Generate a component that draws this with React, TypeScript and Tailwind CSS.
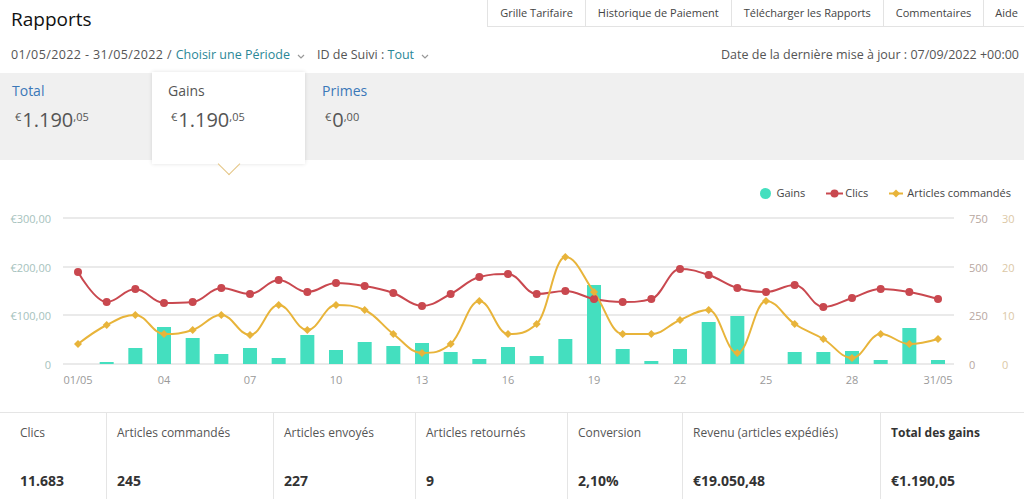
import React from "react";

// chart geometry (page pixels)
const X0 = 78;
const STEP = 28.667;
const BASE = 364;

// tops of the Gains bars, per day
const bars = [364, 362, 348, 327, 338, 354, 348, 358, 335, 350, 342, 346, 343, 352, 359, 347, 356, 339, 285, 349, 361, 349, 322, 316, 364, 352, 352, 351, 360, 328, 360];
const clics = [272, 302, 289, 303, 302, 288, 294, 280, 292, 283, 286, 293, 306, 294, 277, 274, 294, 291, 299, 302, 299, 269, 275, 288, 292, 285, 307, 298, 289, 292, 299];
const articles = [344, 325, 315, 334, 330, 315, 335, 305, 330, 305, 310, 334, 353, 344, 301, 334, 324, 257, 292, 334, 334, 320, 310, 353, 301, 324, 339, 358, 334, 344, 339];

const gridY = [218, 267, 315, 364];
const leftLabels = ["€300,00", "€200,00", "€100,00", "0"];
const clicLabels = ["750", "500", "250", "0"];
const artLabels = ["30", "20", "10", "0"];
const xLabels: [number, string][] = [
  [0, "01/05"], [3, "04"], [6, "07"], [9, "10"], [12, "13"], [15, "16"],
  [18, "19"], [21, "22"], [24, "25"], [27, "28"], [30, "31/05"],
];

const tabs = ["Grille Tarifaire", "Historique de Paiement", "Télécharger les Rapports", "Commentaires", "Aide"];

const stats = [
  { label: "Clics", value: "11.683" },
  { label: "Articles commandés", value: "245" },
  { label: "Articles envoyés", value: "227" },
  { label: "Articles retournés", value: "9" },
  { label: "Conversion", value: "2,10%" },
  { label: "Revenu (articles expédiés)", value: "€19.050,48" },
  { label: "Total des gains", value: "€1.190,05", strong: true },
];

type Pt = { x: number; y: number };

// highcharts-like spline
function splinePath(ys: number[]) {
  const pts: Pt[] = ys.map((y, i) => ({ x: X0 + i * STEP, y }));
  const sm = 1.5;
  const den = sm + 1;
  const right: Pt[] = [];
  let d = `M${pts[0].x},${pts[0].y}`;
  for (let i = 1; i < pts.length; i++) {
    const p = pts[i];
    const last = pts[i - 1];
    const next = pts[i + 1];
    let lcx = p.x;
    let lcy = p.y;
    if (next) {
      lcx = (sm * p.x + last.x) / den;
      lcy = (sm * p.y + last.y) / den;
      const rcx = (sm * p.x + next.x) / den;
      let rcy = (sm * p.y + next.y) / den;
      let corr = 0;
      if (rcx !== lcx) corr = ((rcy - lcy) * (rcx - p.x)) / (rcx - lcx) + p.y - rcy;
      lcy += corr;
      rcy += corr;
      if (lcy > last.y && lcy > p.y) {
        lcy = Math.max(last.y, p.y);
        rcy = 2 * p.y - lcy;
      } else if (lcy < last.y && lcy < p.y) {
        lcy = Math.min(last.y, p.y);
        rcy = 2 * p.y - lcy;
      }
      if (rcy > next.y && rcy > p.y) {
        rcy = Math.max(next.y, p.y);
        lcy = 2 * p.y - rcy;
      } else if (rcy < next.y && rcy < p.y) {
        rcy = Math.min(next.y, p.y);
        lcy = 2 * p.y - rcy;
      }
      right[i] = { x: rcx, y: rcy };
    }
    const lr = right[i - 1] ?? last;
    d += ` C${lr.x},${lr.y} ${lcx},${lcy} ${p.x},${p.y}`;
  }
  return d;
}

function Amount({ whole, cents }: { whole: string; cents: string }) {
  return (
    <div className="flex items-start text-[#555]">
      <span className="text-[11px] leading-none mt-[5px] mr-[1px]">€</span>
      <span className="text-[20px] leading-[27px]">{whole}</span>
      <span className="text-[11px] leading-none mt-[5px]">,{cents}</span>
    </div>
  );
}

function Chevron() {
  return (
    <svg width="8" height="5" viewBox="0 0 8 5" className="ml-[7px] mt-[3px]">
      <path d="M1 1 L4 4 L7 1" fill="none" stroke="#999" strokeWidth="1.2" />
    </svg>
  );
}

function Chart() {
  return (
    <svg width="1024" height="200" viewBox="0 205 1024 200" className="block">
      {gridY.map((y) => (
        <line key={y} x1="63" x2="954" y1={y} y2={y} stroke="#e3e3e3" strokeWidth="1.5" />
      ))}
      {gridY.map((y, i) => (
        <g key={"l" + y} fontSize="11">
          <text x="51" y={y + 5} textAnchor="end" fill="#a6c2bd">{leftLabels[i]}</text>
          <text x="969" y={y + 5} fill="#b7a79f">{clicLabels[i]}</text>
          <text x="1002" y={y + 5} fill="#dcc8a6">{artLabels[i]}</text>
        </g>
      ))}
      {xLabels.map(([i, t]) => (
        <text key={t} x={X0 + i * STEP} y="384" textAnchor="middle" fontSize="11" fill="#9a9a9a">{t}</text>
      ))}
      {bars.map((top, i) =>
        top < BASE ? (
          <rect key={i} x={X0 + i * STEP - 7} y={top} width="14" height={BASE - top} fill="#44dfbf" />
        ) : null
      )}
      <path d={splinePath(clics)} fill="none" stroke="#c9484f" strokeWidth="2" />
      <path d={splinePath(articles)} fill="none" stroke="#e8b43a" strokeWidth="2" />
      {clics.map((y, i) => (
        <circle key={"c" + i} cx={X0 + i * STEP} cy={y} r="4" fill="#c9484f" />
      ))}
      {articles.map((y, i) => {
        const x = X0 + i * STEP;
        return <path key={"a" + i} d={`M${x},${y - 4} L${x + 4},${y} L${x},${y + 4} L${x - 4},${y} Z`} fill="#e8b43a" />;
      })}
    </svg>
  );
}

export default function App() {
  return (
    <div className="w-[1024px] h-[499px] overflow-hidden bg-white font-['Open_Sans',sans-serif] text-[#333]">
      {/* entête */}
      <div className="h-[73px]">
        <div className="flex justify-between items-start h-[32px]">
          <h1 className="pl-[11px] pt-[6px] text-[19px] leading-[26px] text-[#111]">Rapports</h1>
          <div className="flex h-[27px] border-b border-[#e3e3e3]">
            {tabs.map((t, i) => (
              <div
                key={t}
                className={`border-l border-[#e3e3e3] pt-[5px] text-[11px] leading-[15px] text-[#444] ${i === tabs.length - 1 ? "pl-[11px] pr-[6px]" : "px-[12px]"}`}
              >
                {t}
              </div>
            ))}
          </div>
        </div>
        <div className="flex justify-between items-center mt-[14px] text-[12.5px] leading-[17px] text-[#555]">
          <div className="flex items-center pl-[11px]">
            <span className="tracking-[0.4px]">01/05/2022 - 31/05/2022 /&nbsp;</span>
            <span className="text-[#2a8797]">Choisir une Période</span>
            <Chevron />
            <span className="ml-[12px]">ID de Suivi :&nbsp;</span>
            <span className="text-[#2a8797]">Tout</span>
            <Chevron />
          </div>
          <div className="pr-[5px]">Date de la dernière mise à jour : 07/09/2022 +00:00</div>
        </div>
      </div>

      {/* résumé */}
      <div className="flex items-start h-[87px] bg-[#f0f0f0]">
        <div className="w-[152px] pl-[12px] pt-[8px]">
          <div className="text-[14px] leading-[19px] text-[#3b78b8]">Total</div>
          <div className="mt-[6px] pl-[3px]">
            <Amount whole="1.190" cents="05" />
          </div>
        </div>
        <div className="relative z-10 -mt-px w-[153px] h-[92px] bg-white pl-[16px] pt-[9px] shadow-[0_0_4px_rgba(0,0,0,0.12)]">
          <div className="text-[14px] leading-[19px] text-[#555]">Gains</div>
          <div className="mt-[6px] pl-[3px]">
            <Amount whole="1.190" cents="05" />
          </div>
          <div className="absolute left-1/2 bottom-[-8px] -ml-[8px] w-[16px] h-[16px] rotate-45 bg-white border-r border-b border-[#e4c584]" />
        </div>
        <div className="pl-[17px] pt-[8px]">
          <div className="text-[14px] leading-[19px] text-[#3b78b8]">Primes</div>
          <div className="mt-[6px] pl-[3px]">
            <Amount whole="0" cents="00" />
          </div>
        </div>
      </div>

      {/* graphique */}
      <div className="h-[252px]">
        <div className="flex justify-end items-center gap-[21px] pr-[13px] pt-[25px] text-[11px] leading-[16px] text-[#444]">
          <div className="flex items-center gap-[5px]">
            <span className="w-[11px] h-[11px] rounded-full bg-[#44dfbf]" />
            <span>Gains</span>
          </div>
          <div className="flex items-center gap-[2px]">
            <svg width="17" height="9" viewBox="0 0 17 9">
              <line x1="0" x2="17" y1="4.5" y2="4.5" stroke="#c9484f" strokeWidth="2" />
              <circle cx="8.5" cy="4.5" r="4" fill="#c9484f" />
            </svg>
            <span>Clics</span>
          </div>
          <div className="flex items-center gap-[4px]">
            <svg width="14" height="9" viewBox="0 0 14 9">
              <line x1="0" x2="14" y1="4.5" y2="4.5" stroke="#e8b43a" strokeWidth="2" />
              <path d="M7 0.5 L11 4.5 L7 8.5 L3 4.5 Z" fill="#e8b43a" />
            </svg>
            <span>Articles commandés</span>
          </div>
        </div>
        <div className="mt-[4px]">
          <Chart />
        </div>
      </div>

      {/* tableau */}
      <div className="grid grid-cols-[106px_167px_142px_152px_115px_198px_1fr] h-[87px] border-t border-[#e5e5e5]">
        {stats.map((s, i) => (
          <div key={s.label} className={`pt-[12px] ${i === 0 ? "pl-[20px]" : "pl-[10px] border-l border-[#e5e5e5]"}`}>
            <div className={`text-[12px] leading-[16px] ${s.strong ? "font-bold text-[#333]" : "text-[#555]"}`}>{s.label}</div>
            <div className="mt-[30px] text-[14px] leading-[19px] font-bold text-[#333]">{s.value}</div>
          </div>
        ))}
      </div>
    </div>
  );
}
